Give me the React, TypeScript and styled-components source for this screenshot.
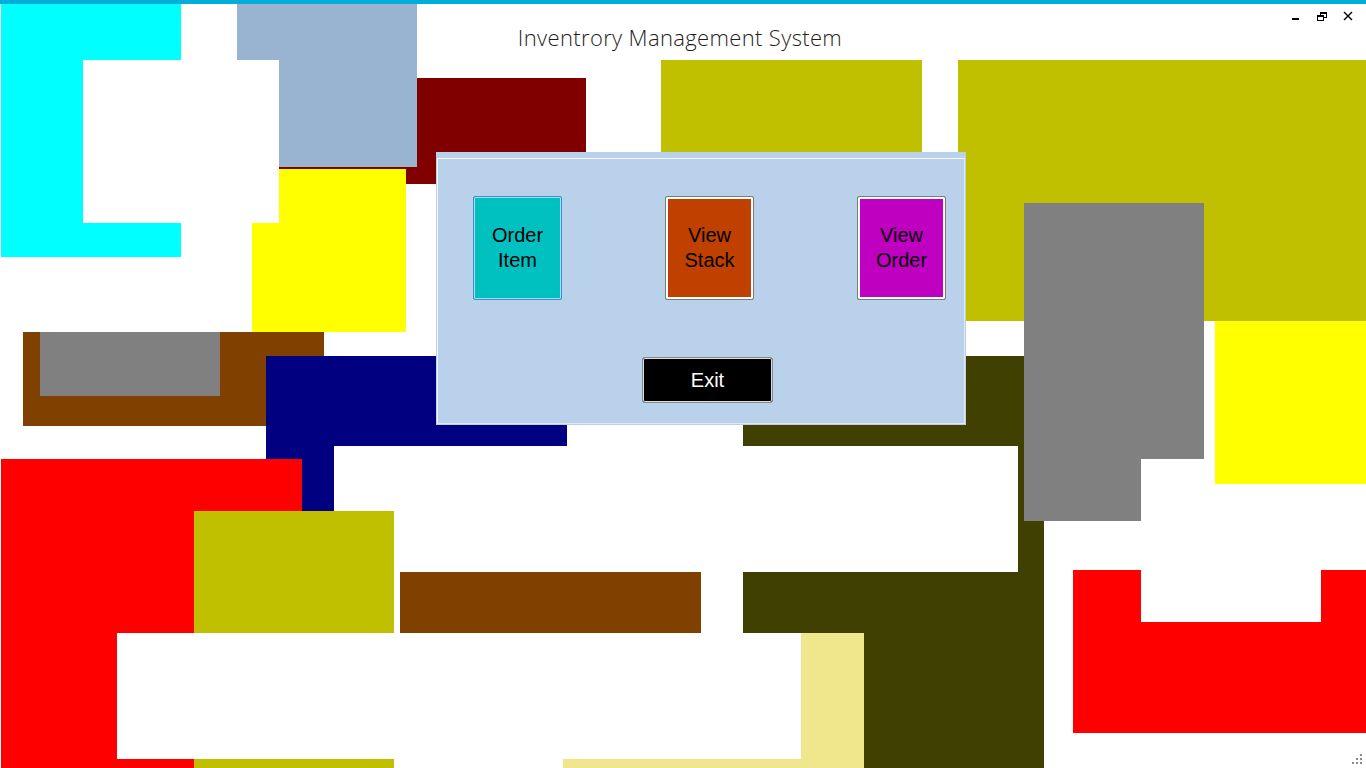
import React from "react";
import styled, { createGlobalStyle } from "styled-components";

const GlobalStyle = createGlobalStyle`
  html, body { margin: 0; padding: 0; background: #ffffff; }
  body { font-family: "Liberation Sans", Arial, sans-serif; }
  * { box-sizing: border-box; }
`;

const Frame = styled.div`
  position: relative;
  width: 1366px;
  height: 768px;
  overflow: hidden;
  background: #ffffff;
`;

const Canvas = styled.div`
  position: absolute;
  inset: 0;
`;

const Block = styled.div<{ $x: number; $y: number; $w: number; $h: number; $c: string }>`
  position: absolute;
  left: ${(p) => p.$x}px;
  top: ${(p) => p.$y}px;
  width: ${(p) => p.$w}px;
  height: ${(p) => p.$h}px;
  background: ${(p) => p.$c};
`;

const TitleBar = styled.header`
  position: absolute;
  top: 0;
  left: 0;
  right: 0;
  pointer-events: none;
`;

const Stripe = styled.div`
  height: 4px;
  background: #00aed9;
`;

const HeaderRow = styled.div`
  display: flex;
  justify-content: center;
  padding: 19px 6px 0 0;
`;

const Title = styled.h1`
  margin: 0;
  font-family: "Open Sans", "Noto Sans", sans-serif;
  font-weight: 300;
  font-size: 22px;
  line-height: 28px;
  color: #1e1e1e;
  letter-spacing: 0.35px;
`;

const WindowControls = styled.div`
  position: absolute;
  top: 10px;
  right: 12px;
  display: flex;
  align-items: center;
  gap: 14px;
`;

const ControlIcon = styled.svg`
  display: block;
  width: 12px;
  height: 12px;
`;

const Dialog = styled.section`
  position: absolute;
  left: 436px;
  top: 152px;
  width: 530px;
  height: 273px;
  background: #b9d1ea;
  padding: 6px 1px 1px 1px;
  display: flex;
`;

const Group = styled.div`
  flex: 1;
  border: 1px solid #f6f8fa;
  border-right-color: #e4e8ec;
  border-bottom-color: #e4e8ec;
  padding: 37px 0 0 35px;
  display: flex;
  flex-direction: column;
  align-items: flex-start;
`;

const ButtonRow = styled.div`
  display: flex;
  gap: 103px;
`;

const Tile = styled.button<{ $bg: string; $focused?: boolean }>`
  width: 89px;
  height: 104px;
  padding: 0;
  border-radius: 2px;
  border: 1px solid ${(p) => (p.$focused ? "#3c8fcf" : "#7a7a7a")};
  box-shadow: inset 0 0 0 ${(p) => (p.$focused ? "1px #a6dcf5" : "2px #ffffff")};
  background: ${(p) => p.$bg};
  color: #000000;
  font-family: "Liberation Sans", Arial, sans-serif;
  font-size: 20px;
  line-height: 25px;
  text-align: center;
  cursor: pointer;
`;

const ExitButton = styled.button`
  margin: 57px 0 0 169px;
  width: 131px;
  height: 46px;
  padding: 0;
  border-radius: 3px;
  border: 1px solid #8a8a8a;
  box-shadow: inset 0 0 0 1px #dcdcdc;
  background: #000000;
  color: #ffffff;
  font-family: "Liberation Sans", Arial, sans-serif;
  font-size: 20px;
  line-height: 25px;
  cursor: pointer;
`;

const Grip = styled.svg`
  position: absolute;
  right: 3px;
  bottom: 3px;
  width: 12px;
  height: 12px;
`;

const blocks = [
  { x: 1, y: 4, w: 180, h: 253, c: "#00ffff" },
  { x: 279, y: 78, w: 307, h: 106, c: "#800000" },
  { x: 237, y: 4, w: 180, h: 163, c: "#99b4d1" },
  { x: 252, y: 169, w: 154, h: 163, c: "#ffff00" },
  { x: 83, y: 60, w: 196, h: 163, c: "#ffffff" },
  { x: 661, y: 60, w: 261, h: 240, c: "#c0c000" },
  { x: 958, y: 60, w: 408, h: 261, c: "#c0c000" },
  { x: 23, y: 332, w: 301, h: 94, c: "#804000" },
  { x: 40, y: 332, w: 180, h: 64, c: "#808080" },
  { x: 266, y: 356, w: 301, h: 155, c: "#000080" },
  { x: 1, y: 459, w: 301, h: 309, c: "#ff0000" },
  { x: 743, y: 356, w: 301, h: 412, c: "#404000" },
  { x: 334, y: 446, w: 684, h: 126, c: "#ffffff" },
  { x: 194, y: 511, w: 200, h: 257, c: "#c0c000" },
  { x: 400, y: 572, w: 301, h: 61, c: "#804000" },
  { x: 563, y: 633, w: 301, h: 135, c: "#f0e68c" },
  { x: 117, y: 633, w: 684, h: 126, c: "#ffffff" },
  { x: 1024, y: 203, w: 180, h: 256, c: "#808080" },
  { x: 1024, y: 459, w: 117, h: 62, c: "#808080" },
  { x: 1215, y: 321, w: 151, h: 163, c: "#ffff00" },
  { x: 1073, y: 570, w: 293, h: 163, c: "#ff0000" },
  { x: 1141, y: 570, w: 180, h: 52, c: "#ffffff" },
];

export default function App() {
  return (
    <>
      <GlobalStyle />
      <Frame>
        <Canvas>
          {blocks.map((b, i) => (
            <Block key={i} $x={b.x} $y={b.y} $w={b.w} $h={b.h} $c={b.c} />
          ))}
        </Canvas>

        <TitleBar>
          <Stripe />
          <HeaderRow>
            <Title>Inventrory Management System</Title>
          </HeaderRow>
          <WindowControls>
            <ControlIcon viewBox="0 0 12 12">
              <rect x="2" y="8" width="7" height="2" fill="#000" />
            </ControlIcon>
            <ControlIcon viewBox="0 0 12 12">
              <rect x="4.5" y="2.5" width="6" height="5" fill="none" stroke="#000" strokeWidth="1" />
              <rect x="4" y="2" width="7" height="2" fill="#000" />
              <rect x="1.5" y="5.5" width="6" height="5" fill="#fff" stroke="#000" strokeWidth="1" />
              <rect x="1" y="5" width="7" height="2" fill="#000" />
            </ControlIcon>
            <ControlIcon viewBox="0 0 12 12">
              <path d="M2 2 L10 10 M10 2 L2 10" stroke="#000" strokeWidth="1.4" />
            </ControlIcon>
          </WindowControls>
        </TitleBar>

        <Dialog>
          <Group>
            <ButtonRow>
              <Tile $bg="#00c0c0" $focused>
                Order
                <br />
                Item
              </Tile>
              <Tile $bg="#c04000">
                View
                <br />
                Stack
              </Tile>
              <Tile $bg="#c000c0">
                View
                <br />
                Order
              </Tile>
            </ButtonRow>
            <ExitButton>Exit</ExitButton>
          </Group>
        </Dialog>

        <Grip viewBox="0 0 12 12">
          <rect x="9" y="1" width="2" height="2" fill="#8a8a8a" />
          <rect x="5" y="5" width="2" height="2" fill="#8a8a8a" />
          <rect x="9" y="5" width="2" height="2" fill="#8a8a8a" />
          <rect x="1" y="9" width="2" height="2" fill="#8a8a8a" />
          <rect x="5" y="9" width="2" height="2" fill="#8a8a8a" />
          <rect x="9" y="9" width="2" height="2" fill="#8a8a8a" />
        </Grip>
      </Frame>
    </>
  );
}
